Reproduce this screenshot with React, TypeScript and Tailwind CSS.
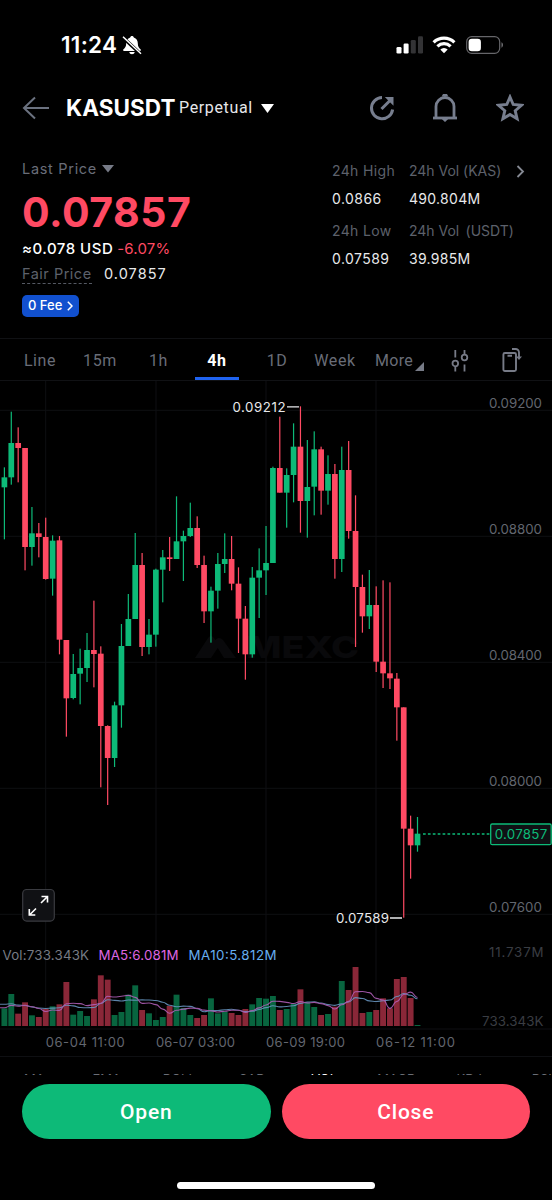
import React from 'react'
import clsx from 'clsx'

const GREEN = '#0dba78'
const RED = '#ff4a63'
const STEP = 6.885
const FIRST_X = 4.4

// direction, high, body top, body bottom, low (thirds of a pixel from the top of the plot)
type Candle = ['g' | 'r', number, number, number, number]

const candles: Candle[] = [
  ['g', 232, 262, 292, 448],
  ['g', 65, 159, 262, 284],
  ['r', 112, 159, 174, 277],
  ['r', 174, 174, 471, 541],
  ['g', 351, 430, 471, 527],
  ['r', 399, 430, 441, 502],
  ['r', 383, 441, 567, 569],
  ['g', 436, 452, 566, 617],
  ['r', 438, 451, 749, 793],
  ['r', 750, 750, 925, 1040],
  ['g', 792, 852, 924, 928],
  ['g', 776, 834, 851, 943],
  ['g', 729, 780, 834, 876],
  ['r', 632, 780, 792, 892],
  ['r', 769, 791, 1008, 1192],
  ['r', 1006, 1008, 1104, 1245],
  ['g', 935, 946, 1104, 1131],
  ['g', 702, 768, 946, 1013],
  ['g', 612, 687, 768, 768],
  ['g', 429, 525, 687, 687],
  ['r', 489, 525, 771, 798],
  ['g', 687, 734, 771, 793],
  ['g', 536, 539, 734, 770],
  ['g', 480, 502, 539, 637],
  ['r', 441, 502, 507, 543],
  ['g', 319, 454, 507, 507],
  ['g', 422, 438, 454, 573],
  ['g', 338, 414, 438, 441],
  ['r', 379, 414, 525, 534],
  ['r', 497, 525, 664, 699],
  ['g', 590, 602, 664, 758],
  ['g', 489, 522, 602, 656],
  ['g', 430, 507, 522, 549],
  ['r', 438, 507, 581, 601],
  ['r', 532, 581, 686, 789],
  ['r', 648, 686, 793, 869],
  ['g', 531, 563, 793, 803],
  ['g', 475, 541, 563, 684],
  ['g', 408, 519, 541, 615],
  ['g', 230, 234, 519, 519],
  ['r', 80, 234, 308, 308],
  ['g', 235, 255, 308, 413],
  ['g', 100, 170, 255, 337],
  ['r', 49, 170, 333, 428],
  ['g', 150, 291, 333, 443],
  ['g', 124, 178, 290, 376],
  ['r', 170, 178, 302, 374],
  ['g', 196, 252, 302, 344],
  ['r', 222, 252, 507, 566],
  ['g', 170, 240, 507, 546],
  ['r', 153, 240, 423, 446],
  ['r', 316, 423, 591, 771],
  ['r', 554, 591, 679, 728],
  ['g', 540, 645, 679, 717],
  ['r', 589, 645, 815, 846],
  ['r', 571, 815, 850, 894],
  ['r', 577, 850, 865, 897],
  ['r', 849, 866, 952, 1052],
  ['r', 952, 952, 1316, 1583],
  ['r', 1277, 1316, 1366, 1466],
  ['g', 1281, 1331, 1366, 1385],
]

const volumes = [
  53, 96, 37, 71, 32, 27, 51, 59, 65, 132, 34, 45, 30, 80, 152, 139, 33, 42, 94, 122, 48, 38, 18, 27, 60, 94, 54, 33,
  24, 33, 83, 38, 43, 39, 33, 51, 65, 84, 82, 90, 48, 51, 66, 110, 70, 57, 33, 36, 58, 135, 108, 177, 39, 42, 48, 83,
  53, 141, 147, 84, 3,
]
// volumes just before the visible range, needed by the averages
const earlier = [80, 80, 80, 75, 65, 60, 50, 55, 55]

const VOLUME_BASE = 645

const averagePath = (period: number) => {
  const all = [...earlier, ...volumes]
  const points = volumes.map((_, i) => {
    const end = i + earlier.length + 1
    const sum = all.slice(end - period, end).reduce((a, b) => a + b, 0)
    return [FIRST_X + i * STEP, VOLUME_BASE - sum / period / 3]
  })
  return points.reduce((d, [x, y], i) => {
    if (i === 0) return `M0 ${y} L${x} ${y}`
    const [px, py] = points[i - 1]
    const mid = (px + x) / 2
    return `${d} C${mid} ${py} ${mid} ${y} ${x} ${y}`
  }, '')
}

const gridY = [29.3, 155.3, 281.3, 407.3, 533.3]
const gridX = [45.7, 156, 266, 376]
const prices = ['0.09200', '0.08800', '0.08400', '0.08000', '0.07600']
const dates = ['06-04 11:00', '06-07 03:00', '06-09 19:00', '06-12 11:00']

const StatusBar = () => (
  <div className="flex h-[74px] items-end justify-between pr-[48px] pb-[17px] pl-[61px]">
    <div className="flex items-center gap-[5px]">
      <span className="w-[56px] text-[22.5px] leading-6 font-semibold tracking-[0.3px]">11:24</span>
      <svg width="20" height="20" viewBox="0 0 20 20">
        <path d="M10 1c-.9 0-1.6.6-1.8 1.4C5.400 3.200 4.200 5.600 4.200 8.200c0 3.400-1.200 4.600-2.700 6-.7.8-.4 1.700.6 1.700h15.800c1 0 1.300-.9.6-1.700-1.500-1.400-2.700-2.600-2.700-6 0-2.600-1.200-5-4-5.800C11.600 1.600 10.900 1 10 1z" fill="#fff" />
        <path d="M7.300 17.100h5.400c-.3 1.400-1.300 2.200-2.700 2.200s-2.400-.8-2.700-2.200z" fill="#fff" />
        <path d="M1 2.600 18.600 19" stroke="#000" strokeWidth="3.400" />
        <path d="M1 1.800 19 18.800" stroke="#fff" strokeWidth="1.500" />
      </svg>
    </div>
    <div className="flex items-center pb-[3px]">
      <svg width="28" height="18" viewBox="0 0 28 18">
        <rect x="0.500" y="11" width="5" height="6.500" rx="1.300" fill="#fff" />
        <rect x="7.600" y="7.500" width="5" height="10" rx="1.300" fill="#fff" />
        <rect x="14.800" y="4" width="5" height="13.500" rx="1.300" fill="#333335" />
        <rect x="22" y="0.300" width="5" height="17.200" rx="1.300" fill="#333335" />
      </svg>
      <svg className="ml-[8px]" width="24" height="18" viewBox="0 0 24 18" fill="none" stroke="#fff" strokeWidth="3.200">
        <path d="M1.600 6.300a15 15 0 0 1 20.800 0" />
        <path d="M5.400 10.300a9.600 9.600 0 0 1 13.200 0" />
        <path d="M12 17.200 8.300 13.500a5.300 5.300 0 0 1 7.400 0z" fill="#fff" stroke="none" />
      </svg>
      <svg className="ml-[10px]" width="38" height="18" viewBox="0 0 38 18">
        <rect x="0.700" y="0.700" width="33" height="16.600" rx="5" fill="none" stroke="#66666a" strokeWidth="1.200" />
        <rect x="2.600" y="2.700" width="12.300" height="12.600" rx="3.300" fill="#fff" />
        <path d="M35.500 6.300c1.900.7 1.900 4.700 0 5.400z" fill="#77777b" />
      </svg>
    </div>
  </div>
)

const Header = () => (
  <header className="flex h-[68px] items-center pr-[28px] pl-[22px]">
    <svg width="28" height="24" viewBox="0 0 28 24" fill="none" stroke="#6b7280" strokeWidth="2">
      <path d="M27 12H2M13 1.500 2 12l11 10.500" />
    </svg>
    <h1 className="ml-[16px] w-[113px] text-[22.5px] font-bold tracking-[0.05px]">KASUSDT</h1>
    <span className="w-[75px] font-[Roboto] text-[16px] tracking-[0.65px] text-[#e6e7ea]">Perpetual</span>
    <svg className="ml-[7px]" width="13" height="9" viewBox="0 0 13 9">
      <path d="M0 0h13L6.500 9z" fill="#fff" />
    </svg>
    <div className="ml-auto flex items-center text-[#777e8e]">
      <svg width="28" height="28" viewBox="0 0 28 28" fill="none" stroke="currentColor" strokeWidth="3">
        <path d="M14 3.600A10.600 10.600 0 1 0 24.600 15.500" />
        <path d="M13.500 15 23 5.500" />
        <path d="M16.800 3h8.700v8.700z" fill="currentColor" stroke="none" />
      </svg>
      <svg className="ml-[36px]" width="26" height="28" viewBox="0 0 26 28" fill="none" stroke="currentColor" strokeWidth="2.800">
        <path d="M4 24V12.500a9 9 0 0 1 18 0V24" />
        <path d="M1 24h24" />
        <path d="M10 2.600a3 3 0 0 1 6 0zM9.500 24.800h7L13 28z" fill="currentColor" stroke="none" />
      </svg>
      <svg className="ml-[38px]" width="28" height="28" viewBox="0 0 28 28" fill="none" stroke="currentColor" strokeWidth="2.900">
        <path d="m14 3 3.200 7.500 8.300.8-6.300 5.400 1.900 8.100L14 20.500l-7.100 4.300 1.900-8.100-6.300-5.400 8.300-.8z" />
      </svg>
    </div>
  </header>
)

const Stat = ({ label, value, wide }: { label: string; value: string; wide?: boolean }) => (
  <div className="h-[60px] whitespace-pre">
    <div className={clsx('text-[14px] leading-[20px] text-[#5d616b]', wide ? 'tracking-[-0.02px]' : 'tracking-[0.35px]')}>
      {label}
    </div>
    <div className={clsx('mt-[7px] text-[14px] leading-[21px] text-[#e8e9eb]', wide ? 'tracking-[0.3px]' : 'tracking-[0.45px]')}>
      {value}
    </div>
  </div>
)

const PriceSummary = () => (
  <section className="flex h-[196px] pl-[22px]">
    <div className="w-[310px] pt-[16px]">
      <div className="flex items-center gap-[5px]">
        <span className="text-[14.500px] leading-[22px] tracking-[0.7px] text-[#696d78]">Last Price</span>
        <svg width="12" height="8" viewBox="0 0 12 8">
          <path d="M0 0h12L6 7.500z" fill="#777b87" />
        </svg>
      </div>
      <div className="mt-[8px] text-[41px] leading-[48px] font-bold tracking-[0.5px] text-[#ff4a63]">0.07857</div>
      <div className="mt-[3px] flex gap-[4px] leading-[20px]">
        <span className="text-[15px] font-medium tracking-[0.5px]">≈0.078 USD</span>
        <span className="text-[15px] tracking-[0.2px] text-[#ff4a63]">-6.07%</span>
      </div>
      <div className="mt-[5px] flex leading-[19px]">
        <span className="h-[20px] w-[70px] border-b border-dashed border-[#555963] text-[14.500px] tracking-[0.5px] text-[#5d616b]">
          Fair Price
        </span>
        <span className="ml-[12px] text-[14.500px] tracking-[1.050px] text-[#e8e9eb]">0.07857</span>
      </div>
      <button className="mt-[11px] flex h-[22px] w-[57px] items-center justify-between rounded-[5px] bg-[#1150cf] px-[6px]">
        <span className="text-[13px] font-medium">0 Fee</span>
        <svg width="6" height="10" viewBox="0 0 6 10" fill="none" stroke="#fff" strokeWidth="1.500">
          <path d="m.8.800 4.200 4.200-4.200 4.200" />
        </svg>
      </button>
    </div>
    <div className="w-[77px] pt-[19px]">
      <Stat label="24h High" value="0.0866" />
      <Stat label="24h Low" value="0.07589" />
    </div>
    <div className="w-[107px] pt-[19px]">
      <Stat label="24h Vol (KAS)" value="490.804M" wide />
      <Stat label={'24h Vol\u2009 (USDT)'} value="39.985M" wide />
    </div>
    <svg className="mt-[23px]" width="9" height="13" viewBox="0 0 9 13" fill="none" stroke="#868a94" strokeWidth="1.800">
      <path d="m1.500 1 5.500 5.500L1.500 12" />
    </svg>
  </section>
)

const intervals = [
  { label: 'Line', width: 'w-[60px]' },
  { label: '15m', width: 'w-[60px]' },
  { label: '1h', width: 'w-[57px]' },
  { label: '4h', width: 'w-[60px]', active: true },
  { label: '1D', width: 'w-[60px]' },
  { label: 'Week', width: 'w-[56px]' },
]

const IntervalTabs = () => (
  <nav className="flex h-[43px] items-stretch border-t border-b border-[#101114] pl-[10px] font-[Roboto] text-[16px] text-[#696d78]">
    {intervals.map(({ label, width, active }) => (
      <div key={label} className={clsx('flex flex-col items-center', width)}>
        <span className={clsx('flex h-[39px] items-center pt-[5px] tracking-[0.6px]', active && 'font-bold text-white')}>{label}</span>
        {active && <span className="h-[3px] w-[44px] shrink-0 bg-[#1f63f0]" />}
      </div>
    ))}
    <div className="ml-[12px] flex h-[39px] items-center gap-[2px] pt-[5px]">
      <span className="tracking-[0.300px]">More</span>
      <svg className="mt-[10px]" width="9" height="9" viewBox="0 0 9 9">
        <path d="M9 0v9H0z" fill="#777b87" />
      </svg>
    </div>
    <svg className="mt-[10px] ml-[27px]" width="18" height="24" viewBox="0 0 18 24" fill="none" stroke="#777b87" strokeWidth="1.800">
      <circle cx="4.300" cy="14.500" r="2.800" />
      <circle cx="13.500" cy="8.500" r="2.800" />
      <path d="M4.300 1v7.500M4.300 17.500v5M13.500 1v4.500M13.500 15.500v7" />
    </svg>
    <svg className="mt-[8px] ml-[33px]" width="20" height="25" viewBox="0 0 20 25" fill="none" stroke="#777b87" strokeWidth="1.900">
      <rect x="1.400" y="6" width="12.600" height="18" rx="1.500" />
      <path d="M5.500 8.800h4.500M10 2h3.500a3.500 3.500 0 0 1 3.500 3.500V10" />
      <path d="m14 9.500 3 3.500 3-3.500z" fill="#777b87" stroke="none" />
    </svg>
  </nav>
)

const Chart = () => (
  <svg className="block" width="552" height="676" viewBox="0 0 552 676" fontFamily="Inter, sans-serif" fontSize="13.3">
    <g stroke="#0e0f12">
      {gridY.map((y) => <path key={y} d={`M0 ${y}H552`} />)}
      {gridX.map((x) => <path key={x} d={`M${x} 0V645`} />)}
      <path d="M0 648H552M0 675.500H552" />
    </g>

    <g fill="#09090b">
      <path d="M195 277l13-20q3-4 6 0l5 8-8 12zM214 261q4-7 9-2l13 18h-12z" />
      <text x="246" y="277" fontSize="30" fontWeight="800" textLength="113" lengthAdjust="spacingAndGlyphs">MEXC</text>
    </g>

    <g transform="translate(0 9)">
      {candles.map(([dir, high, top, bottom, low], i) => {
        const x = FIRST_X + i * STEP
        return (
          <g key={i} fill={dir === 'g' ? GREEN : RED}>
            <rect x={x - 0.6} y={high / 3} width={1.2} height={(low - high) / 3} />
            <rect x={x - 2.85} y={top / 3} width={5.7} height={(bottom - top) / 3} />
          </g>
        )
      })}
    </g>

    <g fill="#62666f">
      {prices.map((price, i) => (
        <text key={price} x="489" y={gridY[i] - 2.3} textLength="53">{price}</text>
      ))}
    </g>

    <g fill="#e8e9eb">
      <text x="232.500" y="31" textLength="53">0.09212</text>
      <path d="M287 25.800h12M390 537h12" stroke="#e8e9eb" strokeWidth="1.300" />
      <text x="336" y="542" textLength="53">0.07589</text>
    </g>

    <path d="M423 453H490" stroke={GREEN} strokeWidth="1.400" strokeDasharray="2.700 2.200" />
    <rect x="490.700" y="443" width="60.500" height="20.700" rx="1.500" fill="#0f1114" stroke={GREEN} strokeWidth="1.300" />
    <text x="494.700" y="458.300" textLength="52.500" fill={GREEN}>0.07857</text>

    <rect x="22.700" y="508.500" width="31.600" height="31.600" rx="4" fill="#101114" stroke="#3a3b40" strokeWidth="1.200" />
    <path d="M41 522l6-6M41.500 515.500h6v6M36 527.500l-6 6M29.300 528v6h6" fill="none" stroke="#fff" strokeWidth="1.600" />

    {volumes.map((volume, i) => (
      <rect
        key={i}
        x={FIRST_X + i * STEP - 2.95}
        y={VOLUME_BASE - volume / 3}
        width={5.9}
        height={volume / 3}
        fill={candles[i][0] === 'g' ? '#08653f' : '#8a2738'}
      />
    ))}
    <g fill="none" strokeWidth="1.100" opacity="0.85">
      <path d={averagePath(10)} stroke="#6b9bc7" />
      <path d={averagePath(5)} stroke="#b562bd" />
    </g>

    <text x="2.500" y="578.700" textLength="86.500" fill="#777b84">Vol:733.343K</text>
    <text x="98.500" y="578.700" textLength="80" fill="#dd66e0">MA5:6.081M</text>
    <text x="188.500" y="578.700" textLength="88" fill="#66aef0">MA10:5.812M</text>
    <g fill="#3a3d43">
      <text x="489" y="576.300" textLength="54.500">11.737M</text>
      <text x="482" y="645" textLength="61.500">733.343K</text>
    </g>
    <g fill="#62666f" fontSize="13">
      {dates.map((date, i) => (
        <text key={date} x={gridX[i]} y="666" textLength="79">{date}</text>
      ))}
    </g>
  </svg>
)

const indicators = ['MA', 'EMA', 'BOLL', 'SAR', 'VOL', 'MACD', 'KDJ', 'RSI']

// only the top edge of this row shows above the action buttons
const IndicatorRow = () => (
  <div className="flex h-[18px] overflow-hidden pt-[13px] text-[13px] leading-[18px] text-[#6b6e76]">
    {indicators.map((name) => (
      <span
        key={name}
        className={clsx('w-[72.500px] shrink-0 text-center', name === 'VOL' && 'text-white', name === 'MA' && '-ml-[2px]')}
      >
        {name}
      </span>
    ))}
  </div>
)

const App: React.FC = () => {
  return (
    <div className="h-[1200px] w-[552px] overflow-hidden bg-black font-[Inter,sans-serif] text-white">
      <StatusBar />
      <Header />
      <PriceSummary />
      <IntervalTabs />
      <Chart />
      <IndicatorRow />
      <div className="mt-[9px] flex gap-[11px] px-[22px] font-[Roboto] text-[21px] font-medium tracking-[0.8px]">
        <button className="h-[55px] flex-1 rounded-full bg-[#0dba78] pt-[2px]">Open</button>
        <button className="h-[55px] flex-1 rounded-full bg-[#ff4a63] pt-[2px]">Close</button>
      </div>
      <div className="mx-auto mt-[43px] h-[7px] w-[198px] rounded-full bg-white" />
    </div>
  )
}

export default App
